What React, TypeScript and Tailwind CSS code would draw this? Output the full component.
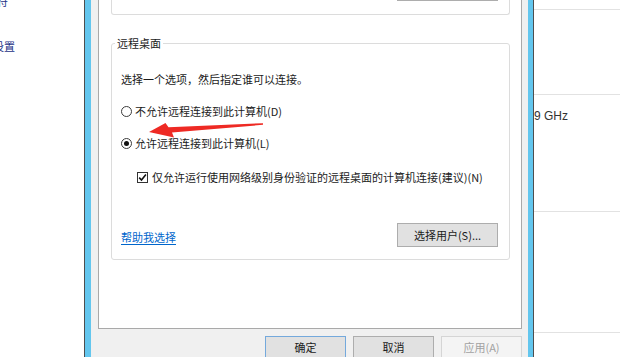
import React from "react";

function Radio({ checked }: { checked?: boolean }) {
  return (
    <span className="w-[11px] h-[11px] rounded-full border border-[#3c3c3c] bg-white flex items-center justify-center shrink-0">
      {checked ? <span className="w-[5px] h-[5px] rounded-full bg-[#111]" /> : null}
    </span>
  );
}

function Check() {
  return (
    <span className="w-[11px] h-[11px] border border-[#333] bg-white flex items-center justify-center shrink-0">
      <svg width="9" height="9" viewBox="0 0 9 9">
        <path d="M1.2 4.6 L3.5 7 L7.9 1.6" fill="none" stroke="#111" strokeWidth="1.6" />
      </svg>
    </span>
  );
}

export default function App() {
  return (
    <div className="relative w-[620px] h-[357px] overflow-hidden flex bg-white font-[family-name:'Noto_Sans_CJK_SC','Noto_Sans_CJK_JP',sans-serif] text-[11px] text-[#1b1b1b]">
      {/* left window */}
      <div className="w-[84px] shrink-0 bg-white flex flex-col">
        <div className="-mt-[6px] w-[8px] h-[14px] leading-[14px] overflow-hidden flex justify-end whitespace-nowrap text-[#1e3287]">
          字符
        </div>
        <div className="mt-[31px] w-[15px] h-[14px] leading-[14px] overflow-hidden flex justify-end whitespace-nowrap text-[#1e3287]">
          远程设置
        </div>
      </div>

      {/* dialog */}
      <div className="w-[450px] shrink-0 flex border-x border-[#4e4e4e] bg-[#63c6ee] pl-[6px] pr-[5px]">
        <div className="flex-1 bg-[#f0f0f0] flex flex-col pl-[7px] pr-[6px]">
          <div className="h-[329px] shrink-0 bg-white border-x border-b border-[#a9a9a9] flex flex-col pl-[12px] pr-[11px]">
            {/* upper group (cut off) */}
            <div className="h-[15px] shrink-0 border-x border-b border-[#dcdcdc] rounded-b-[3px] flex justify-end pr-[11px]">
              <div className="w-[101px] h-[1px] bg-[#adadad]" />
            </div>

            {/* remote desktop group */}
            <fieldset className="mt-[21px] border border-[#dcdcdc] rounded-[3px] p-0 m-0 min-w-0">
              <legend className="ml-[3px] px-[2px] h-[14px] leading-[14px]">远程桌面</legend>
              <div className="pl-[9px] pr-[11px] pb-[12px] flex flex-col">
                <div className="mt-[22px] h-[14px] leading-[14px]">选择一个选项，然后指定谁可以连接。</div>
                <div className="mt-[18px] h-[14px] leading-[14px] flex items-center gap-[3px]">
                  <Radio />
                  <span>不允许远程连接到此计算机(D)</span>
                </div>
                <div className="mt-[18px] h-[14px] leading-[14px] flex items-center gap-[3px]">
                  <Radio checked />
                  <span>允许远程连接到此计算机(L)</span>
                </div>
                <div className="mt-[20px] ml-[16px] h-[14px] leading-[14px] flex items-center gap-[4px]">
                  <Check />
                  <span className="whitespace-nowrap">仅允许运行使用网络级别身份验证的远程桌面的计算机连接(建议)(N)</span>
                </div>
                <div className="mt-[39px] flex justify-between items-center">
                  <span className="mt-[4px] h-[14px] leading-[14px] text-[#0066cc] underline underline-offset-[2px]">帮助我选择</span>
                  <div className="w-[101px] h-[24px] border border-[#adadad] bg-[#e1e1e1] flex items-center justify-center">
                    选择用户(S)...
                  </div>
                </div>
              </div>
            </fieldset>
          </div>

          {/* bottom buttons */}
          <div className="mt-[7px] flex justify-end gap-[7px]">
            <div className="w-[81px] h-[23px] border border-[#74a9dc] bg-[#e1e1e1] flex items-center justify-center">确定</div>
            <div className="w-[81px] h-[23px] border border-[#adadad] bg-[#e1e1e1] flex items-center justify-center">取消</div>
            <div className="w-[81px] h-[23px] border border-[#d5d5d5] bg-[#f4f4f4] text-[#a2a2a2] flex items-center justify-center">应用(A)</div>
          </div>
        </div>
      </div>

      {/* right window */}
      <div className="flex-1 bg-white flex flex-col pt-[9px]">
        <div className="h-[85px] shrink-0 border-t border-[#e2e2e2]" />
        <div className="h-[117px] shrink-0 border-t border-[#e2e2e2] pt-[14px]">
          <div className="h-[14px] leading-[14px] whitespace-nowrap font-[family-name:'Liberation_Sans',sans-serif] text-[12px] text-[#333]">
            9 GHz
          </div>
        </div>
        <div className="h-[121px] shrink-0 border-t border-[#e2e2e2]" />
        <div className="flex-1 border-t border-[#e2e2e2]" />
      </div>

      {/* red annotation arrow */}
      <svg className="absolute inset-0 pointer-events-none" width="620" height="357" viewBox="0 0 620 357">
        <polygon
          points="149,132 165.5,123 168.5,127.3 263,123.2 263,124.8 172,132.6 174,137.6"
          fill="#ee2a24"
        />
      </svg>
    </div>
  );
}
